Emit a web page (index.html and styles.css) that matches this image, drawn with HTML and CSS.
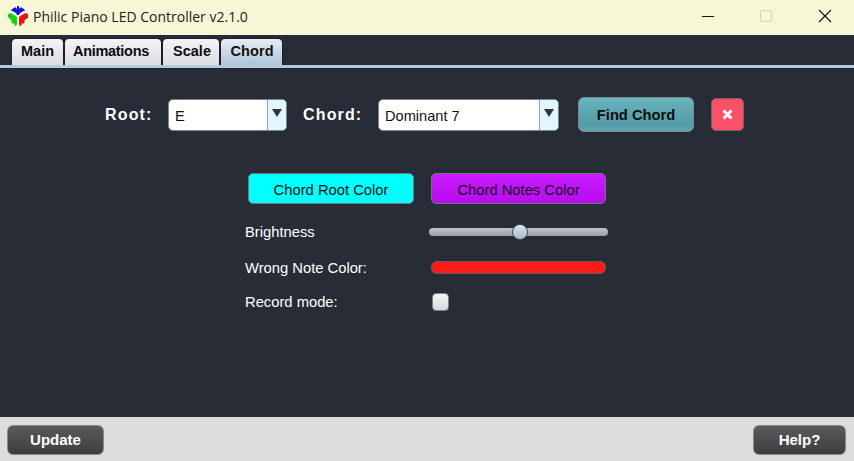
FILE: index.html
```html
<!DOCTYPE html>
<html lang="en">
<head>
<meta charset="utf-8">
<title>Philic Piano LED Controller v2.1.0</title>
<link rel="stylesheet" href="styles.css">
</head>
<body>
<div class="window">
  <header class="titlebar">
    <svg class="app-icon" width="20" height="21" viewBox="0 0 20 21" aria-hidden="true">
      <path fill="#1212e0" d="M9 0h2v3l2-2 1 1 2 1 1 2-2 0-1 1-2 1-1 2h-2L8 7 6 6 5 5H3l1-2 2-1 1-1 2 2z"/>
      <path fill="#12d412" d="M0 8l3-1 1 1 2 1 2 1 1 2v6l-1 2H7l-1-3-1 1-1-1-1-1 1-1-1-1-1-1L0 11z"/>
      <path fill="#e81212" d="M20 8l-3-1-1 1-2 1-2 1-1 2v6l1 2h1l1-3 1 1 1-1 1-1-1-1 1-1 1-1 2-1z"/>
    </svg>
    <span class="title">Philic Piano LED Controller v2.1.0</span>
    <div class="win-controls">
      <svg class="win-btn" width="14" height="14" viewBox="0 0 14 14" aria-hidden="true"><path d="M2 7.500h12" stroke="#111" stroke-width="1"/></svg>
      <svg class="win-btn" width="14" height="14" viewBox="0 0 14 14" aria-hidden="true"><rect x="1.500" y="1.500" width="11" height="11" rx="1.500" fill="none" stroke="#d2d4b4" stroke-width="1"/></svg>
      <svg class="win-btn" width="14" height="14" viewBox="0 0 14 14" aria-hidden="true"><path d="M1 1l12 12M13 1L1 13" stroke="#111" stroke-width="1.100"/></svg>
    </div>
  </header>

  <nav class="tabs">
    <div class="tab tab-main">Main</div>
    <div class="tab tab-anim">Animations</div>
    <div class="tab tab-scale">Scale</div>
    <div class="tab tab-chord active">Chord</div>
  </nav>
  <div class="tab-line"></div>

  <main class="content">
    <section class="finder">
      <span class="finder-label">Root:</span>
      <div class="combo combo-root"><span class="combo-value">E</span><span class="combo-arrow"><i class="tri"></i></span></div>
      <span class="finder-label label-chord">Chord:</span>
      <div class="combo combo-chord"><span class="combo-value">Dominant 7</span><span class="combo-arrow"><i class="tri"></i></span></div>
      <button class="find-btn">Find Chord</button>
      <button class="close-btn" aria-label="Clear">
        <svg width="11" height="11" viewBox="0 0 11 11" aria-hidden="true"><path d="M1.500 1.500l8 8M9.500 1.500l-8 8" stroke="#fff" stroke-width="3"/></svg>
      </button>
    </section>

    <section class="color-buttons">
      <button class="color-btn root-color">Chord Root Color</button>
      <button class="color-btn notes-color">Chord Notes Color</button>
    </section>

    <section class="settings">
      <div class="row row-brightness">
        <span class="row-label">Brightness</span>
        <div class="slider"><span class="thumb"></span></div>
      </div>
      <div class="row row-wrong">
        <span class="row-label">Wrong Note Color:</span>
        <div class="color-bar"></div>
      </div>
      <div class="row row-record">
        <span class="row-label">Record mode:</span>
        <div class="checkbox"></div>
      </div>
    </section>
  </main>

  <footer class="footer">
    <button class="foot-btn update">Update</button>
    <button class="foot-btn help">Help?</button>
  </footer>
</div>
</body>
</html>
```
FILE: styles.css
```css
* { box-sizing: border-box; }
html, body { margin: 0; padding: 0; }
body {
  width: 854px;
  height: 461px;
  overflow: hidden;
  font-family: "Liberation Sans", Arial, sans-serif;
}
button { font-family: inherit; padding: 0; cursor: default; }

.window {
  width: 854px;
  height: 461px;
  display: flex;
  flex-direction: column;
  background: #282c36;
}

/* Title bar */
.titlebar {
  height: 35px;
  flex: none;
  background: #f5f7d5;
  display: flex;
  align-items: center;
  padding-left: 8px;
}
.app-icon { flex: none; margin-top: -3px; }
.title {
  margin-left: 5px;
  font-family: "Open Sans", "Noto Sans", sans-serif;
  font-size: 14px;
  color: #222;
  margin-top: -2px;
}
.win-controls {
  margin-left: auto;
  display: flex;
  align-items: center;
  gap: 45px;
  padding-right: 22px;
  margin-top: -4px;
}
.win-btn { display: block; }

/* Tabs */
.tabs {
  height: 30px;
  flex: none;
  padding: 3px 0 0 11px;
  display: flex;
  background: #282c36;
}
.tab {
  height: 27px;
  border: 1px solid #1c1f26;
  border-bottom: none;
  border-radius: 5px 5px 0 0;
  background: linear-gradient(#f4f4f6, #dddde4);
  font-size: 14.500px;
  font-weight: bold;
  color: #0c0c0c;
  text-align: center;
  line-height: 24px;
}
.tab-main { width: 53px; }
.tab-anim { width: 98px; padding-right: 4px; letter-spacing: -0.3px; }
.tab-scale { width: 58px; padding-left: 2px; }
.tab-chord { width: 63px; padding-left: 1px; letter-spacing: 0.1px; }
.tab.active { background: linear-gradient(#e8edf3, #aec4d9); color: #111; }
.tab-line {
  height: 4px;
  flex: none;
  background: #b5c9de;
  border-bottom: 1px solid #22252d;
}

/* Content */
.content {
  flex: 1;
  min-height: 0;
  background: #282c36;
}
.finder {
  display: flex;
  align-items: center;
  height: 35px;
  margin-top: 28px;
  padding-left: 105px;
}
.finder-label {
  font-size: 16px;
  font-weight: bold;
  letter-spacing: 1.150px;
  color: #fff;
  width: 63px;
}
.label-chord { width: 75px; margin-left: 16px; }
.combo {
  height: 32px;
  display: flex;
  background: #fff;
  border: 1px solid #7e828c;
  border-radius: 5px;
  overflow: hidden;
  margin-top: 1px;
}
.combo-root { width: 119px; }
.combo-chord { width: 181px; }
.combo-value {
  flex: 1;
  padding-left: 6px;
  font-size: 14.600px;
  line-height: 32px;
  color: #111;
}
.combo-arrow {
  width: 19px;
  flex: none;
  background: #dff8ff;
  border-left: 1px solid #8fa5ad;
  display: flex;
  justify-content: center;
  padding-top: 9px;
}
.tri {
  display: block;
  width: 0;
  height: 0;
  border-left: 5px solid transparent;
  border-right: 5px solid transparent;
  border-top: 8px solid #333;
}
.find-btn {
  width: 116px;
  height: 35px;
  margin-left: 19px;
  border: 1px solid #7c8a92;
  border-radius: 6px;
  background: linear-gradient(#68b4be, #549aa6 80%, #5ea8b2);
  font-size: 14.700px;
  font-weight: bold;
  color: #0c0c0c;
}
.close-btn {
  width: 33px;
  height: 33px;
  margin-left: 17px;
  border: 1px solid #77606a;
  border-radius: 5px;
  background: #fb5068;
  display: flex;
  align-items: center;
  justify-content: center;
}

.color-buttons {
  display: flex;
  margin-top: 41px;
  padding-left: 248px;
  gap: 17px;
}
.color-btn {
  height: 31px;
  padding-top: 2px;
  border: 1px solid #6f7680;
  border-radius: 5px;
  font-size: 14.750px;
  color: #111;
}
.root-color { width: 166px; background: #0ff; }
.notes-color { width: 175px; background: linear-gradient(#c91cff, #b90af0); }

.settings {
  padding-left: 245px;
}
.row {
  display: flex;
  align-items: center;
  color: #fff;
  font-size: 14.750px;
}
.row-label { width: 184px; flex: none; }
.row-brightness { height: 24px; margin-top: 16px; }
.row-wrong { height: 14px; margin-top: 17px; }
.row-record { height: 18px; margin-top: 18px; }
.slider {
  position: relative;
  width: 179px;
  height: 8px;
  border-radius: 4px;
  background: linear-gradient(#c0c4ca, #9a9ea8);
}
.thumb {
  position: absolute;
  left: 83px;
  top: -4px;
  width: 16px;
  height: 16px;
  border-radius: 50%;
  border: 1px solid #3e4f5e;
  background: linear-gradient(#dbe4ec, #a9bccb);
}
.color-bar {
  width: 175px;
  height: 13px;
  margin-left: 2px;
  margin-top: -2px;
  border: 1px solid #6d5a60;
  border-radius: 6px;
  background: #ff1a1a;
}
.checkbox {
  width: 17px;
  height: 18px;
  margin-left: 3px;
  border: 1px solid #7a7f88;
  border-radius: 4px;
  background: linear-gradient(#f6f6f8, #d8d8de);
}

/* Footer */
.footer {
  height: 44px;
  flex: none;
  background: #dcdcdc;
  display: flex;
  justify-content: space-between;
  align-items: center;
  padding: 0 8px 0 7px;
}
.foot-btn {
  height: 30px;
  border: 1px solid #8a8a8a;
  border-radius: 6px;
  background: linear-gradient(#5a5a5a, #3e3e3e);
  color: #fff;
  font-size: 15px;
  font-weight: bold;
  margin-top: 1px;
}
.update { width: 97px; }
.help { width: 93px; }
```
